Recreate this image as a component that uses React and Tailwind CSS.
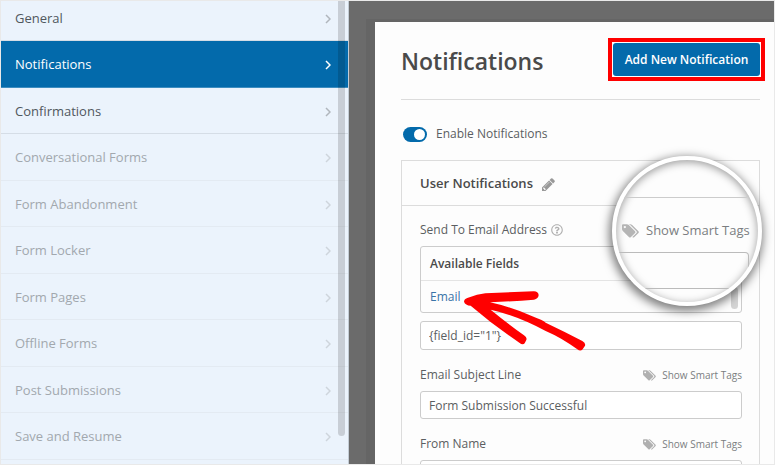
import { FaRegQuestionCircle } from "react-icons/fa";

const sections = [
  { name: "General", height: "h-[46px]" },
  { name: "Notifications", height: "h-[47px]", active: true },
  { name: "Confirmations", height: "h-[46px]" },
  { name: "Conversational Forms", height: "h-[47px]", locked: true },
  { name: "Form Abandonment", height: "h-[46px]", locked: true },
  { name: "Form Locker", height: "h-[47px]", locked: true },
  { name: "Form Pages", height: "h-[46px]", locked: true },
  { name: "Offline Forms", height: "h-[47px]", locked: true },
  { name: "Post Submissions", height: "h-[46px]", locked: true },
  { name: "Save and Resume", height: "h-[47px]", locked: true },
];

function Chevron({ className }) {
  return (
    <svg viewBox="0 0 6 10" className={`w-[6px] h-[10px] ${className}`} fill="none" stroke="currentColor" strokeWidth="1.5" aria-hidden="true">
      <path d="M1 1l4 4-4 4" />
    </svg>
  );
}

function TagsIcon({ className }) {
  return (
    <svg viewBox="0 -1408 1920 1536" className={className} fill="currentColor" aria-hidden="true">
      <path
        transform="scale(1 -1)"
        d="M448 1088q0 53-37.500 90.500t-90.500 37.500-90.500-37.500-37.500-90.500 37.500-90.500 90.500-37.500 90.500 37.500 37.500 90.500zM1515 512q0-53-37-90l-491-492q-39-37-91-37-53 0-90 37l-715 716q-38 37-64.500 101t-26.500 117v416q0 52 38 90t90 38h416q53 0 117-26.500t102-64.500l715-714q37-39 37-91zM1899 512q0-53-37-90l-491-492q-39-37-91-37-36 0-59 14t-53 45l470 470q37 37 37 90 0 52-37 91l-715 714q-38 38-102 64.500t-117 26.500h224q53 0 117-26.500t102-64.500l715-714q37-39 37-91z"
      />
    </svg>
  );
}

function PencilIcon({ className }) {
  return (
    <svg viewBox="0 -1408 1536 1536" className={className} fill="currentColor" aria-hidden="true">
      <path
        transform="scale(1 -1)"
        d="M363 0l91 91-235 235-91-91v-107h128v-128h107zM886 928q0 22-22 22-10 0-17-7l-542-542q-7-7-7-17 0-22 22-22 10 0 17 7l542 542q7 7 7 17zM832 1120l416-416-832-832h-416v416zM1515 1024q0-53-37-90l-166-166-416 416 166 165q36 38 90 38 53 0 91-38l235-234q37-39 37-91z"
      />
    </svg>
  );
}

function Sidebar() {
  return (
    <nav className="relative w-[348px] shrink-0 overflow-hidden border-r border-[#c3ccd5] bg-[#ebf3fc]">
      <ul className="-mt-[6px]">
        {sections.map((s) => {
          const tone = s.active
            ? "bg-[#036aab] text-white border-[#3d8dc0]"
            : s.locked
              ? "text-[#a2a8ae] border-[#e3eaf2]"
              : "text-[#50575e] border-[#d5dde6]";
          return (
            <li key={s.name}>
              <a href="#" className={`flex items-center justify-between border-b pt-[2px] pl-[14px] pr-[17px] text-[13px] ${s.height} ${tone}`}>
                {s.name}
                <Chevron className={s.active ? "text-white" : s.locked ? "text-[#ced5dc]" : "text-[#b0b6bc]"} />
              </a>
            </li>
          );
        })}
      </ul>
      <div className="absolute top-0 right-[3px] h-[435px] w-[7px] rounded-b-full bg-black/15" />
    </nav>
  );
}

function SmartTags() {
  return (
    <button type="button" className="flex items-center gap-[6px] text-[10px] leading-4 text-[#7b7e81]">
      <TagsIcon className="h-[11px] w-[13px] text-[#b0b0b0]" />
      Show Smart Tags
    </button>
  );
}

function Field({ id, label, value }) {
  return (
    <div className="mt-[17px]">
      <div className="mb-2 flex h-4 items-center justify-between">
        <label htmlFor={id} className="text-xs leading-4">{label}</label>
        <SmartTags />
      </div>
      <input id={id} defaultValue={value} className="block h-7 w-full rounded-[3px] border border-[#ccc] bg-white px-2 text-xs" />
    </div>
  );
}

function Magnifier() {
  return (
    <div className="absolute -top-[5px] -right-[3px] size-[150px] rounded-full border-4 border-white bg-white shadow-[-1px_3px_10px_2px_rgba(0,0,0,0.5)]">
      <div className="flex size-full flex-col overflow-hidden rounded-full bg-[#fdfdfd] shadow-[inset_0_2px_8px_rgba(0,0,0,0.4)]">
        <div className="mr-[9px] h-[38px] shrink-0 rounded-br-[4px] border-r border-b border-[#ccc]" />
        <div className="flex h-[54px] shrink-0 items-center gap-[7px] pt-[14px] pb-[2px] pl-[6px] text-[13px] whitespace-nowrap text-[#7b7e81]">
          <TagsIcon className="h-[14px] w-[17px] text-[#b5b5b5]" />
          Show Smart Tags
        </div>
        <div className="mr-[9px] h-[37px] shrink-0 rounded-r-[4px] border-y border-r border-[#bbb]" />
      </div>
    </div>
  );
}

function Arrow() {
  return (
    <svg viewBox="0 0 366 186" className="pointer-events-none absolute top-[43px] left-[43px] h-[62px] w-[122px]" fill="#f00" aria-hidden="true">
      <path d="M0 35 Q0 26 12 23 Q40 13 64 10 Q140 6 208 4 Q222 3 224 15 Q223 26 210 29 Q150 34 78 37 Q150 53 205 79 Q237 91 245 98 Q300 124 355 153 Q366 160 363 167 L356 178 Q349 185 340 178 Q290 142 245 123 Q160 77 80 59 Q130 100 180 136 Q190 142 187 150 L182 160 Q176 166 166 158 Q90 107 20 47 Q4 46 0 35Z" />
    </svg>
  );
}

export default function App() {
  return (
    <div className="flex h-screen overflow-hidden border border-[#e9e9e9] bg-[#ebf3fc] font-['Open_Sans','Noto_Sans',sans-serif] text-[#5b5e61]">
      <Sidebar />
      <main className="min-w-0 flex-1 bg-[#6b6b6b] pt-[21px] pl-[26px]">
        <div className="min-h-full bg-[#fdfdfd] px-[26px] pr-[14px] pt-[21px] shadow-[0_0_0_1px_#656565,-4px_2px_0_5px_#656565]">
          <header className="flex h-[57px] items-start justify-between border-b border-[#dcdcdc]">
            <h1 className="text-[23px] leading-9 font-semibold text-[#4a4a4a]">Notifications</h1>
            <div className="outline-4 outline-offset-1 outline-[#f00]">
              <button type="button" className="block h-[33px] w-[147px] rounded-[3px] bg-[#036aab] text-xs font-semibold whitespace-nowrap text-white">
                Add New Notification
              </button>
            </div>
          </header>
          <label className="mt-6 flex h-[20px] items-center gap-[9px] pl-[2px] text-xs">
            <input type="checkbox" role="switch" defaultChecked className="peer sr-only" />
            <span className="flex h-[15px] w-6 items-center justify-end rounded-full bg-[#036aab] px-[2px]">
              <span className="size-[11px] rounded-full bg-white" />
            </span>
            Enable Notifications
          </label>
          <section className="relative mt-4 border border-[#dcdcdc]">
            <div className="flex h-[45px] items-center gap-[9px] border-b border-[#dcdcdc] pt-[2px] pl-[18px]">
              <h2 className="text-[13px] font-semibold text-[#4a4a4a]">User Notifications</h2>
              <button type="button" aria-label="Rename notification">
                <PencilIcon className="size-[13px] text-[#999]" />
              </button>
            </div>
            <div className="pt-4 pr-[17px] pb-6 pl-[18px]">
              <div className="flex h-4 items-center gap-1">
                <label htmlFor="send-to" className="text-xs leading-4">Send To Email Address</label>
                <FaRegQuestionCircle className="size-3 text-[#b0b0b0]" />
              </div>
              <div className="relative mt-2 rounded-[3px] border border-[#ccc] text-xs">
                <h3 className="flex h-[34px] items-center border-b border-[#e4e4e4] pl-[9px] font-semibold text-[#4a4a4a]">Available Fields</h3>
                <a href="#" className="flex h-[31px] items-center pl-[9px] text-[#3a74a8]">Email</a>
                <div className="absolute right-[3px] bottom-[3px] h-[22px] w-[7px] rounded-full bg-[#d4d4d4]" />
                <Arrow />
              </div>
              <input id="send-to" defaultValue={'{field_id="1"}'} className="mt-2 block h-[29px] w-full rounded-[3px] border border-[#ccc] bg-white px-2 text-xs" />
              <Field id="subject" label="Email Subject Line" value="Form Submission Successful" />
              <Field id="from" label="From Name" value="" />
            </div>
            <Magnifier />
          </section>
        </div>
      </main>
    </div>
  );
}
